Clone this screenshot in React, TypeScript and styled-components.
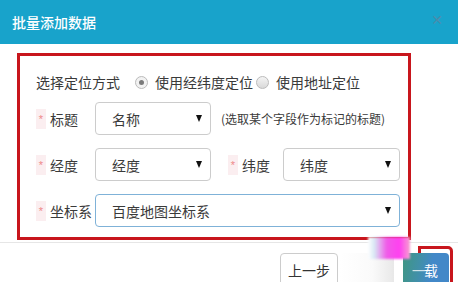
import React from 'react'
import styled, { createGlobalStyle, css } from 'styled-components'

const GlobalStyle = createGlobalStyle`
  html, body {
    margin: 0;
    padding: 0;
    background: #fff;
  }
  body {
    font-family: 'Noto Sans CJK SC', 'Noto Sans', 'Liberation Sans', sans-serif;
    color: #333;
  }
`

const Dialog = styled.div`
  position: relative;
  width: 458px;
  height: 282px;
  overflow: hidden;
  background: #fff;
`

const Header = styled.div`
  height: 44px;
  padding: 0 12px;
  background: #18a3cb;

  display: flex;
  align-items: center;
  justify-content: space-between;
`

const Title = styled.div`
  font-size: 14px;
  font-weight: 500;
  color: #fff;
  line-height: 20px;
  margin-top: -1px;
`

const Close = styled.div`
  font-family: 'DejaVu Sans', sans-serif;
  font-size: 14px;
  font-weight: bold;
  line-height: 20px;
  color: #4a8cab;
  margin-top: -4px;
  margin-right: 3px;
`

const Body = styled.div`
  padding: 9px 47px 2px 17px;
`

const FormBox = styled.div`
  border: 3px solid #c8161d;
  padding: 16px 0 10px 16px;

  display: flex;
  flex-direction: column;
  gap: 13px;
`

const Row = styled.div<{ $first?: boolean }>`
  display: flex;
  align-items: center;
  height: ${p => (p.$first ? '20px' : '33px')};
  ${p =>
    p.$first &&
    css`
      margin-bottom: -3px;
    `}
`

const Text = styled.span`
  font-size: 14px;
  line-height: 20px;
  color: #3a3a3a;
  white-space: nowrap;
`

const Radio = styled.span<{ $checked?: boolean }>`
  box-sizing: border-box;
  width: 13px;
  height: 13px;
  border-radius: 50%;
  border: 1px solid #bbb;
  background: ${p => (p.$checked ? '#f2f2f2' : 'linear-gradient(#f4f4f4, #d9d9d9)')};
  margin: 0 7px 0 ${p => (p.$checked ? '15px' : '3px')};
  position: relative;

  ${p =>
    p.$checked &&
    css`
      &::after {
        content: '';
        position: absolute;
        left: 3px;
        top: 3px;
        width: 5px;
        height: 5px;
        border-radius: 50%;
        background: #7a7a7a;
      }
    `}
`

const Label = styled.div<{ $width: number; $indent?: number }>`
  box-sizing: border-box;
  width: ${p => p.$width}px;
  padding-left: ${p => p.$indent ?? 0}px;
  flex: none;
  display: flex;
  align-items: center;
`

const Star = styled.span`
  width: 10px;
  height: 20px;
  margin-right: 4px;
  background: #fbeef0;
  color: #e88;
  font-family: 'Liberation Sans', sans-serif;
  font-size: 11px;
  line-height: 20px;
  text-align: center;
`

const Select = styled.div<{ $width: number; $focus?: boolean }>`
  box-sizing: border-box;
  width: ${p => p.$width}px;
  height: 33px;
  padding: 0 8px 0 16px;
  border: 1px solid ${p => (p.$focus ? '#7fb2d8' : '#ccc')};
  border-radius: 4px;
  background: #fff;
  flex: none;

  display: flex;
  align-items: center;
  justify-content: space-between;
`

const Caret = styled.span`
  width: 0;
  height: 0;
  border-left: 3.5px solid transparent;
  border-right: 3.5px solid transparent;
  border-top: 7px solid #111;
`

const Hint = styled.span`
  margin-left: 10px;
  font-size: 12px;
  color: #3a3a3a;
  white-space: nowrap;
`

const Footer = styled.div`
  border-top: 1px solid #e6e6e6;
  padding: 10px 9px 0 0;

  display: flex;
  justify-content: flex-end;
  gap: 2px;
`

const buttonBase = css`
  box-sizing: border-box;
  height: 34px;
  border-radius: 4px;
  font-size: 14px;
  display: flex;
  align-items: center;
  justify-content: center;
  flex: none;
`

const PrevButton = styled.div`
  ${buttonBase};
  width: 58px;
  border: 1px solid #ccc;
  background: #fff;
  color: #333;
`

const GhostButton = styled.div`
  ${buttonBase};
  width: 54px;
  margin-right: 7px;
  background: linear-gradient(90deg, #fff 0%, #fafafa 60%, #e8e8e8 100%);
`

const PrimaryWrap = styled.div`
  position: relative;
  width: 46px;
  height: 34px;
`

const RedOutline = styled.div`
  position: absolute;
  left: 15px;
  top: -7px;
  width: 35px;
  height: 50px;
  box-sizing: border-box;
  border: 3px solid #c8161d;
  border-radius: 0 5px 0 0;
`

const PrimaryButton = styled.div`
  ${buttonBase};
  position: relative;
  width: 46px;
  background: linear-gradient(100deg, #3f9682 0%, #4190a8 35%, #4288c8 60%, #4288c8 100%);
  color: #fff;
  justify-content: flex-end;
  padding-right: 11px;
`

const Smudge = styled.span`
  color: rgba(255, 255, 255, 0.75);
  letter-spacing: -2px;
  filter: blur(0.6px);
`

const Glitch = styled.div`
  position: absolute;
  left: 368px;
  top: 237px;
  width: 42px;
  height: 22px;
  background: linear-gradient(90deg, #fff 0%, #d8e8f4 15%, #f05ae8 45%, #ff40f0 75%, #f6a0d0 100%);
  filter: blur(1px);
`

function RequiredLabel({ text, width, indent }: { text: string; width: number; indent?: number }) {
  return (
    <Label $width={width} $indent={indent}>
      <Star>*</Star>
      <Text>{text}</Text>
    </Label>
  )
}

function SelectBox({ value, width, focus }: { value: string; width: number; focus?: boolean }) {
  return (
    <Select $width={width} $focus={focus}>
      <Text>{value}</Text>
      <Caret />
    </Select>
  )
}

export default function App() {
  return (
    <Dialog>
      <GlobalStyle />
      <Header>
        <Title>批量添加数据</Title>
        <Close>✕</Close>
      </Header>
      <Body>
        <FormBox>
          <Row $first>
            <Text>选择定位方式</Text>
            <Radio $checked />
            <Text>使用经纬度定位</Text>
            <Radio />
            <Text>使用地址定位</Text>
          </Row>
          <Row>
            <RequiredLabel text='标题' width={59} />
            <SelectBox value='名称' width={116} />
            <Hint>(选取某个字段作为标记的标题)</Hint>
          </Row>
          <Row>
            <RequiredLabel text='经度' width={59} />
            <SelectBox value='经度' width={116} />
            <RequiredLabel text='纬度' width={72} indent={17} />
            <SelectBox value='纬度' width={117} />
          </Row>
          <Row>
            <RequiredLabel text='坐标系' width={59} />
            <SelectBox value='百度地图坐标系' width={305} focus />
          </Row>
        </FormBox>
      </Body>
      <Footer>
        <PrevButton>上一步</PrevButton>
        <GhostButton />
        <PrimaryWrap>
          <RedOutline />
          <PrimaryButton>
            <Smudge>一</Smudge>载
          </PrimaryButton>
        </PrimaryWrap>
      </Footer>
      <Glitch />
    </Dialog>
  )
}
